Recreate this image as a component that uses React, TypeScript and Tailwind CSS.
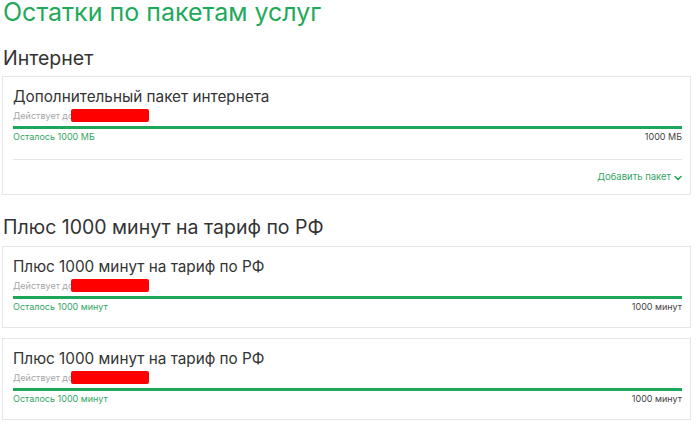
import React from "react";

const font = { fontFamily: "Inter, 'Noto Sans', sans-serif" };

function Chevron() {
  return (
    <svg width="8" height="6" viewBox="0 0 8 6" className="ml-[3px] mt-[1px]">
      <path d="M1 1.5 L4 4.5 L7 1.5" fill="none" stroke="#1fa95b" strokeWidth="1.6" strokeLinecap="round" strokeLinejoin="round" />
    </svg>
  );
}

function Card({ title, left, right, extra }: { title: string; left: string; right: string; extra?: boolean }) {
  return (
    <div
      className={`ml-[2px] w-[689px] border border-[#e6e6e6] pl-[10px] pr-[8px] pt-[10px] bg-white ${
        extra ? "pb-[10px]" : "pb-[13px]"
      }`}
    >
      <div className="text-[15.3px] leading-[19px] text-[#333333]">{title}</div>
      <div className="mt-[3px] flex items-center h-[13px]">
        <span className="text-[9px] leading-[13px] text-[#a6a6a6]">Действует до</span>
        <span className="ml-[-2px] w-[78px] h-[13px] rounded-[2px] bg-[#ff0000]" />
      </div>
      <div className="mt-[4px] h-[3px] bg-[#1ea65a]" />
      <div className="mt-[1px] flex justify-between text-[9px] leading-[14px]">
        <span className="text-[#33a565]">{left}</span>
        <span className="text-[#444444]">{right}</span>
      </div>
      {extra && (
        <>
          <div className="mt-[15px] h-px bg-[#e6e6e6]" />
          <div className="mt-[10px] flex justify-end items-center text-[9.5px] leading-[14px] text-[#33a565]">
            Добавить пакет
            <Chevron />
          </div>
        </>
      )}
    </div>
  );
}

export default function App() {
  return (
    <div className="w-[700px] h-[430px] overflow-hidden bg-white" style={font}>
      <div className="pl-[3px] text-[25px] leading-[25px] text-[#1fa95b]">Остатки по пакетам услуг</div>
      <div className="pl-[3px] mt-[21px] text-[19.5px] leading-[24px] text-[#333333]">Интернет</div>
      <div className="mt-[6px]">
        <Card title="Дополнительный пакет интернета" left="Осталось 1000 МБ" right="1000 МБ" extra />
      </div>
      <div className="pl-[3px] mt-[20px] text-[19.5px] leading-[24px] text-[#333333]">Плюс 1000 минут на тариф по РФ</div>
      <div className="mt-[7px] flex flex-col gap-[10px]">
        <Card title="Плюс 1000 минут на тариф по РФ" left="Осталось 1000 минут" right="1000 минут" />
        <Card title="Плюс 1000 минут на тариф по РФ" left="Осталось 1000 минут" right="1000 минут" />
      </div>
    </div>
  );
}
